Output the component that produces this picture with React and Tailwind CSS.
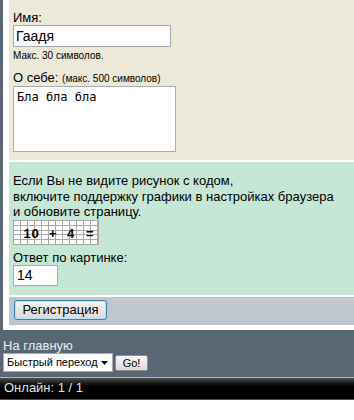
export default function App() {
  const cols = Array.from({ length: 13 }, (_, i) => i * 7);
  const rows = Array.from({ length: 6 }, (_, i) => i * 4.8);
  return (
    <div className="w-[354px] h-[420px] overflow-hidden bg-white text-black font-['Liberation_Sans',Arial,sans-serif]">
      <div className="bg-[#596775] pl-[3px]">
        <div className="bg-white pl-[6px] pb-[5px] flex flex-col gap-[2px]">
          {/* Beige section */}
          <div className="bg-[#ece9d8] h-[160px] pl-[4px] pt-[10px]">
            <div className="text-[13px] leading-[15px]">Имя:</div>
            <div className="w-[158px] h-[22px] bg-white border border-[#a5acb2] pl-[2px] text-[14px] leading-[20px]">
              Гаадя
            </div>
            <div className="mt-[3px] text-[10px] leading-[12px]">Макс. 30 символов.</div>
            <div className="mt-[9px] text-[13px] leading-[14px]">
              О себе: <span className="text-[10px]">(макс. 500 символов)</span>
            </div>
            <div className="mt-[0px] w-[163px] h-[66px] bg-white border border-[#a5acb2] px-[3px] pt-[3px] text-[12px] leading-[15px] font-['DejaVu_Sans_Mono',monospace]">
              Бла бла бла
            </div>
          </div>
          {/* Green section */}
          <div className="bg-[#c6e7d6] h-[133px] pl-[4px] pt-[11px]">
            <div className="text-[13px] leading-[15.5px]">
              Если Вы не видите рисунок с кодом,
              <br />
              включите поддержку графики в настройках браузера
              <br />
              и обновите страницу.
            </div>
            <svg width="86" height="25" viewBox="0 0 86 25" className="block">
              <rect x="0" y="0" width="86" height="25" fill="#ffffff" />
              {cols.map((x) => (
                <line key={"c" + x} x1={x + 0.5} y1="0" x2={x + 0.5} y2="25" stroke="#a8a8a8" strokeWidth="1" />
              ))}
              {rows.map((y) => (
                <line key={"r" + y} x1="0" y1={Math.round(y) + 0.5} x2="86" y2={Math.round(y) + 0.5} stroke="#a8a8a8" strokeWidth="1" />
              ))}
              <line x1="0" y1="24.5" x2="86" y2="24.5" stroke="#a8a8a8" />
              <line x1="85.5" y1="0" x2="85.5" y2="25" stroke="#a8a8a8" />
              <g fontFamily="'Liberation Sans', Arial, sans-serif" fontWeight="bold" fontSize="13" fill="#000">
                <text x="10.5" y="18">1</text>
                <text x="18.5" y="18">0</text>
                <text x="36" y="18">+</text>
                <text x="54" y="18">4</text>
                <text x="73" y="18">=</text>
              </g>
            </svg>
            <div className="mt-[5px] text-[13px] leading-[15px]">Ответ по картинке:</div>
            <div className="w-[45px] h-[21px] bg-white border border-[#a5acb2] pl-[3px] text-[14px] leading-[19px]">
              14
            </div>
          </div>
          {/* Gray section */}
          <div className="bg-[#bfc6cf] h-[28px] pl-[5px] pt-[3px]">
            <div className="w-[93px] h-[20px] rounded-[3px] border border-[#3c7fb1] bg-gradient-to-b from-[#f4f4f4] to-[#dadada] shadow-[inset_0_0_0_1px_#b9e1f7] flex items-center justify-center text-[13px] leading-[14px]">
              Регистрация
            </div>
          </div>
        </div>
        {/* Slate area */}
        <div className="h-[47px] pt-[9px]">
          <div className="text-[13px] leading-[14px] text-[#e6ebf0]">На главную</div>
          <div className="flex items-center gap-[2px]">
            <div className="w-[110px] h-[19px] bg-white border border-[#a5acb2] flex items-center justify-between pl-[3px] pr-[4px]">
              <span className="text-[11px] leading-[13px]">Быстрый переход</span>
              <svg width="7" height="4" viewBox="0 0 7 4">
                <path d="M0 0H7L3.5 4Z" fill="#000" />
              </svg>
            </div>
            <div className="w-[33px] h-[16px] rounded-[2px] border border-[#8e8f8f] bg-gradient-to-b from-[#f6f6f6] to-[#dddddd] flex items-center justify-center text-[11px] leading-[12px]">
              Go!
            </div>
          </div>
        </div>
      </div>
      {/* Footer */}
      <div className="h-[23px] border-t border-[#b5b5b5] border-b border-b-[#ff0000] bg-gradient-to-b from-[#505050] via-[#000000] to-[#000000] pl-[4px] text-[13px] leading-[20px] text-[#dfe4e8]">
        Онлайн: 1 / 1
      </div>
    </div>
  );
}
